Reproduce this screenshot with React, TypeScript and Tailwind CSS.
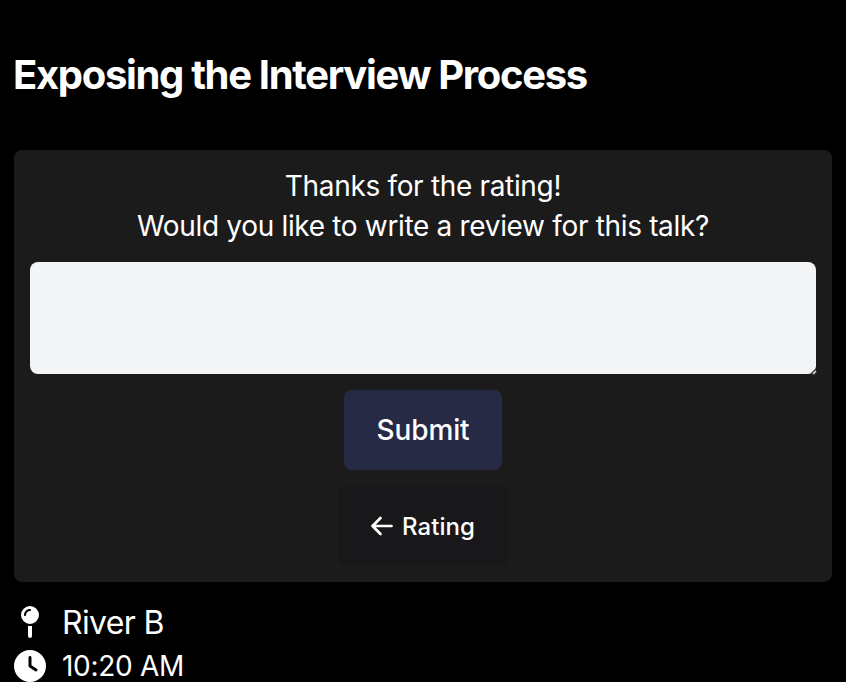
import { FaMapPin, FaClock } from "react-icons/fa6";

export default function App() {
  return (
    <main className="h-[682px] w-[846px] overflow-hidden bg-black px-3.5 font-['Inter',sans-serif] text-white">
      <h1 className="-ml-px pt-[51px] text-[40px] leading-[48px] font-bold tracking-[-1.33px] whitespace-nowrap">Exposing the Interview Process</h1>
      <section className="mt-[51px] flex h-[432px] flex-col items-center rounded-lg bg-[#1b1b1b] px-4 pt-4">
        <p className="text-[28px] leading-10 tracking-[-0.33px] whitespace-nowrap">Thanks for the rating!</p>
        <p className="text-[28px] leading-10 tracking-[-0.33px] whitespace-nowrap">Would you like to write a review for this talk?</p>
        <div className="relative mt-4 h-28 w-full shrink-0">
          <textarea className="block size-full resize-none rounded-lg bg-[#f3f4f6] text-black outline-none" />
          <svg className="pointer-events-none absolute -right-px -bottom-px size-[7px]" viewBox="0 0 7 7" fill="none">
            <path d="M1 6 6 1" stroke="#333" strokeWidth="1.6" />
            <path d="M3 6 6 3" stroke="#c4c5c7" strokeWidth="1.8" />
          </svg>
        </div>
        <button className="mt-4 h-20 w-[158px] shrink-0 rounded-lg bg-[#272a44] text-[28px] font-medium tracking-[-0.1px]">Submit</button>
        <button className="mt-4 flex h-20 w-[170px] shrink-0 items-center justify-center gap-2 rounded-lg bg-[#18181a] text-2xl font-medium">
          <svg className="-ml-px size-6" viewBox="0 0 24 24" fill="none" stroke="currentColor" strokeWidth="2.7" strokeLinecap="round" strokeLinejoin="round">
            <path d="M10.5 4 2.5 12l8 8M2.5 12h19" />
          </svg>
          <span className="pt-0.5 tracking-[0.1px]">Rating</span>
        </button>
      </section>
      <div className="mt-6 flex h-8 items-center gap-4 text-[32px] tracking-[-0.65px]">
        <FaMapPin className="size-8" />
        <span className="pt-0.5">River B</span>
      </div>
      <div className="mt-3 flex h-8 items-center gap-4 text-[28px] tracking-[-0.3px]">
        <FaClock className="size-8" />
        <span>10:20 AM</span>
      </div>
    </main>
  );
}
